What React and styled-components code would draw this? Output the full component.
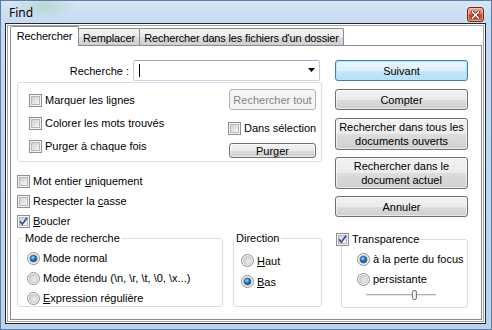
import React, { useId } from 'react';
import styled, { createGlobalStyle } from 'styled-components';

const GlobalStyle = createGlobalStyle`
  html, body { margin: 0; padding: 0; background: #fff; }
  body {
    width: 492px; height: 330px; overflow: hidden;
    font-family: "Liberation Sans", Arial, sans-serif;
    font-size: 11px; color: #000;
  }
  * { box-sizing: border-box; }
`;

const Window = styled.div`
  width: 492px;
  height: 330px;
  border: 1px solid #5d7ea8;
  background:
    radial-gradient(ellipse 34px 12px at 44px 5px, rgba(160, 205, 175, 0.55), rgba(160, 205, 175, 0) 100%),
    linear-gradient(to bottom, #d7e6f6 0px, #c6daf1 22px, #bad2ee 100%);
  padding: 0 5px 5px 4px;
  display: flex;
  flex-direction: column;
`;

const TitleBar = styled.div`
  height: 22px;
  display: flex;
  justify-content: space-between;
  align-items: flex-start;
  padding: 4px 2px 0 4px;
`;

const Title = styled.span`
  font-family: "Noto Sans", "Open Sans", sans-serif;
  font-size: 12px;
  line-height: 16px;
  color: #000;
`;

const CloseButton = styled.div`
  width: 17px;
  height: 15px;
  margin-top: 2px;
  border: 1px solid #6b2a1e;
  border-radius: 3px;
  background: linear-gradient(to bottom, #e8a99b 0%, #d9755e 45%, #c63f22 55%, #d86a45 100%);
  box-shadow: inset 0 0 0 1px rgba(255, 220, 200, 0.5);
  display: flex;
  align-items: center;
  justify-content: center;
`;

const Client = styled.div`
  flex: 1;
  border: 1px solid #23272e;
  background: #fff;
  box-shadow: inset 0 0 0 1px #fff, inset 0 0 0 2px #a3a3a3;
  padding: 2px 3px 3px 4px;
  display: flex;
  flex-direction: column;
`;

const TabStrip = styled.div`
  height: 19px;
  display: flex;
  align-items: flex-end;
`;

const Tab = styled.div`
  width: ${p => p.$w}px;
  margin-left: ${p => (p.$first ? 0 : -1)}px;
  height: ${p => (p.$active ? 20 : 17)}px;
  margin-bottom: ${p => (p.$active ? -1 : 0)}px;
  border: 1px solid #898c95;
  border-bottom: none;
  border-radius: 2px 2px 0 0;
  background: ${p => (p.$active ? '#fff' : 'linear-gradient(to bottom, #f2f2f2 0%, #ebebeb 50%, #dddddd 51%, #cfcfcf 100%)')};
  position: relative;
  z-index: ${p => (p.$active ? 2 : 1)};
  text-align: center;
  line-height: ${p => (p.$active ? 18 : 17)}px;
  padding-top: ${p => (p.$active ? 0 : 1)}px;
  letter-spacing: -0.15px;
  white-space: nowrap;
`;

const Page = styled.div`
  flex: 1;
  border: 1px solid #898c95;
  background: #fff;
  display: flex;
  padding: 14px 0 11px 6px;
`;

const LeftCol = styled.div`
  width: 305px;
  display: flex;
  flex-direction: column;
`;

const RightCol = styled.div`
  width: 133px;
  margin-left: 13px;
  display: flex;
  flex-direction: column;
`;

const SearchRow = styled.div`
  height: 21px;
  display: flex;
  align-items: center;
`;

const FieldLabel = styled.span`
  width: 112px;
  text-align: right;
  margin-right: 4px;
  white-space: nowrap;
`;

const Combo = styled.div`
  width: 187px;
  height: 21px;
  border: 1px solid;
  border-color: #9fb0c6 #bccbdc #c9d6e4 #bccbdc;
  border-radius: 2px;
  background: #fff;
  display: flex;
  align-items: center;
  justify-content: space-between;
  padding: 0 3px 0 5px;
`;

const Caret = styled.span`
  width: 1px;
  height: 13px;
  background: #000;
`;

const OptionsBox = styled.div`
  margin-top: 1px;
  height: 80px;
  border: 1px solid #d5dfe5;
  border-radius: 3px;
  display: flex;
  justify-content: space-between;
  padding: 0 5px 0 11px;
`;

const OptionsLeft = styled.div`
  display: flex;
  flex-direction: column;
  gap: 7px;
  padding-top: 9px;
`;

const OptionsRight = styled.div`
  width: 87px;
  display: flex;
  flex-direction: column;
  padding-top: 6px;
`;

const CheckRow = styled.label`
  height: ${p => p.$h || 16}px;
  margin-top: ${p => p.$mt || 0}px;
  margin-left: ${p => p.$ml || 0}px;
  display: flex;
  align-items: center;
  gap: 3px;
  white-space: nowrap;
  line-height: 14px;
`;

const CheckList = styled.div`
  margin-top: 9px;
  display: flex;
  flex-direction: column;
`;

const GroupsRow = styled.div`
  display: flex;
  gap: 10px;
`;

const Group = styled.fieldset`
  margin: 0;
  min-width: 0;
  width: ${p => p.$w}px;
  height: 76px;
  border: 1px solid #d5dfe5;
  border-radius: 3px;
  padding: ${p => p.$pt}px 0 0 ${p => p.$pl}px;
  margin-left: ${p => p.$ml || 0}px;
  margin-top: ${p => (p.$bottom ? 'auto' : '0')};
`;

const Legend = styled.legend`
  margin-left: ${p => p.$ml}px;
  padding: 0 ${p => (p.$pad ?? 2)}px;
  line-height: 14px;
  height: 14px;
  display: flex;
  align-items: center;
  gap: 3px;
  white-space: nowrap;
`;

const RadioRow = styled.label`
  height: ${p => p.$h}px;
  display: flex;
  align-items: center;
  gap: 3px;
  white-space: nowrap;
`;

const Button = styled.button`
  font: inherit;
  color: ${p => (p.$disabled ? '#838383' : '#000')};
  width: 100%;
  height: ${p => p.$h || 21}px;
  margin-top: ${p => p.$mt || 0}px;
  padding: 0;
  line-height: 14px;
  border: 1px solid ${p => (p.$default ? '#3c7fb1' : p.$disabled ? '#adb2b5' : '#707070')};
  border-radius: 3px;
  background: ${p =>
    p.$default
      ? 'linear-gradient(to bottom, #e9f5fc 0%, #dcf0fb 50%, #c6e7f9 51%, #b6dff6 100%)'
      : p.$disabled
      ? '#f4f4f4'
      : 'linear-gradient(to bottom, #f2f2f2 0%, #ebebeb 50%, #dddddd 51%, #cfcfcf 100%)'};
  box-shadow: inset 0 0 0 1px ${p => (p.$default ? 'rgba(180,230,250,0.9)' : p.$disabled ? '#f4f4f4' : 'rgba(255,255,255,0.55)')};
  cursor: default;
`;

const SliderRow = styled.div`
  margin: 1px 0 0 9px;
  width: 70px;
  height: 10px;
  position: relative;
  display: flex;
  align-items: center;
`;

const SliderTrack = styled.div`
  width: 100%;
  height: 2px;
  border-top: 1px solid #b0b0b0;
  border-bottom: 1px solid #e6e6e6;
`;

const SliderThumb = styled.div`
  position: absolute;
  left: 46px;
  top: 0;
  width: 5px;
  height: 10px;
  border: 1px solid #7a7a7a;
  border-radius: 2px;
  background: linear-gradient(to right, #fdfdfd, #dedede);
`;

const U = styled.span`
  text-decoration: underline;
  text-underline-offset: 1px;
`;

function CheckBox({ checked }) {
  const id = useId().replace(/:/g, '');
  return (
    <svg width="13" height="13" viewBox="0 0 13 13" style={{ flex: 'none' }}>
      <defs>
        <linearGradient id={`cb${id}`} x1="0" y1="0" x2="1" y2="1">
          <stop offset="0" stopColor="#cbcfd5" />
          <stop offset="1" stopColor="#f7f7f7" />
        </linearGradient>
      </defs>
      <rect x="0.5" y="0.5" width="12" height="12" fill="#f4f4f4" stroke="#8e8f8f" />
      <rect x="2.5" y="2.5" width="8" height="8" fill={`url(#cb${id})`} stroke="#b4b8bd" />
      {checked && (
        <path d="M3 6.3 L5.3 9.2 L10 2.8" fill="none" stroke="#3a4d8f" strokeWidth="1.7" />
      )}
    </svg>
  );
}

function Radio({ checked }) {
  const id = useId().replace(/:/g, '');
  return (
    <svg width="13" height="13" viewBox="0 0 13 13" style={{ flex: 'none' }}>
      <defs>
        <linearGradient id={`rb${id}`} x1="0" y1="0" x2="1" y2="1">
          <stop offset="0" stopColor="#c9ccd1" />
          <stop offset="1" stopColor="#f6f6f6" />
        </linearGradient>
        <radialGradient id={`rd${id}`} cx="0.4" cy="0.35" r="0.7">
          <stop offset="0" stopColor="#a9e0fa" />
          <stop offset="0.45" stopColor="#2c7fd0" />
          <stop offset="1" stopColor="#0a3a7a" />
        </radialGradient>
      </defs>
      <circle cx="6.5" cy="6.5" r="6" fill="#f4f4f4" stroke="#8e8f8f" />
      <circle cx="6.5" cy="6.5" r="4" fill={`url(#rb${id})`} stroke="#b4b8bd" strokeWidth="0.8" />
      {checked && <circle cx="6.5" cy="6.5" r="3.3" fill={`url(#rd${id})`} stroke="#1c4f8a" strokeWidth="0.6" />}
    </svg>
  );
}

function Check({ checked, children, ...rest }) {
  return (
    <CheckRow {...rest}>
      <CheckBox checked={checked} />
      <span>{children}</span>
    </CheckRow>
  );
}

function RadioOpt({ checked, h, children }) {
  return (
    <RadioRow $h={h}>
      <Radio checked={checked} />
      <span>{children}</span>
    </RadioRow>
  );
}

export default function App() {
  return (
    <>
      <GlobalStyle />
      <Window>
        <TitleBar>
          <Title>Find</Title>
          <CloseButton>
            <svg width="9" height="8" viewBox="0 0 9 8">
              <path d="M1.5 1 L7.5 7 M7.5 1 L1.5 7" stroke="#5a1c10" strokeWidth="3" strokeLinecap="square" />
              <path d="M1.5 1 L7.5 7 M7.5 1 L1.5 7" stroke="#fff" strokeWidth="1.6" strokeLinecap="square" />
            </svg>
          </CloseButton>
        </TitleBar>
        <Client>
          <TabStrip>
            <Tab $w={69} $first $active>Rechercher</Tab>
            <Tab $w={62}>Remplacer</Tab>
            <Tab $w={205}>Rechercher dans les fichiers d'un dossier</Tab>
          </TabStrip>
          <Page>
            <LeftCol>
              <SearchRow>
                <FieldLabel>Recherche :</FieldLabel>
                <Combo>
                  <Caret />
                  <svg width="8" height="5" viewBox="0 0 8 5">
                    <path d="M0 0 H7 L3.5 4 Z" fill="#000" />
                  </svg>
                </Combo>
              </SearchRow>
              <OptionsBox>
                <OptionsLeft>
                  <Check>Marquer les lignes</Check>
                  <Check>Colorer les mots trouvés</Check>
                  <Check>Purger à chaque fois</Check>
                </OptionsLeft>
                <OptionsRight>
                  <Button $disabled>Rechercher tout</Button>
                  <Check $mt={10} $ml={-1}>Dans sélection</Check>
                  <Button $mt={7} $h={15}>Pur<U>g</U>er</Button>
                </OptionsRight>
              </OptionsBox>
              <CheckList>
                <Check $h={20}>Mot entier <U>u</U>niquement</Check>
                <Check $h={20}>Respecter la <U>c</U>asse</Check>
                <Check $h={20} checked><span><U>B</U>oucler</span></Check>
              </CheckList>
              <GroupsRow>
                <Group $w={206} $pl={9} $pt={3}>
                  <Legend $ml={-4}>Mode de recherche</Legend>
                  <RadioOpt h={20} checked>Mode normal</RadioOpt>
                  <RadioOpt h={20}>Mode étendu (\n, \r, \t, \0, \x...)</RadioOpt>
                  <RadioOpt h={20}><U>E</U>xpression régulière</RadioOpt>
                </Group>
                <Group $w={89} $pl={7} $pt={5}>
                  <Legend $ml={-7}>Direction</Legend>
                  <RadioOpt h={21}><U>H</U>aut</RadioOpt>
                  <RadioOpt h={21} checked><U>B</U>as</RadioOpt>
                </Group>
              </GroupsRow>
            </LeftCol>
            <RightCol>
              <Button $default>Suivant</Button>
              <Button $mt={8}>Compter</Button>
              <Button $mt={8} $h={32}>Rechercher dans tous les<br />documents ouverts</Button>
              <Button $mt={7} $h={32}>Rechercher dans le<br />document actuel</Button>
              <Button $mt={7}>Annuler</Button>
              <Group $w={127} $pl={15} $pt={3} $ml={6} $bottom>
                <Legend $ml={-21} $pad={0}>
                  <CheckBox checked />
                  <span>Transparence</span>
                </Legend>
                <RadioOpt h={20} checked>à la perte du focus</RadioOpt>
                <RadioOpt h={20}>persistante</RadioOpt>
                <SliderRow>
                  <SliderTrack />
                  <SliderThumb />
                </SliderRow>
              </Group>
            </RightCol>
          </Page>
        </Client>
      </Window>
    </>
  );
}
